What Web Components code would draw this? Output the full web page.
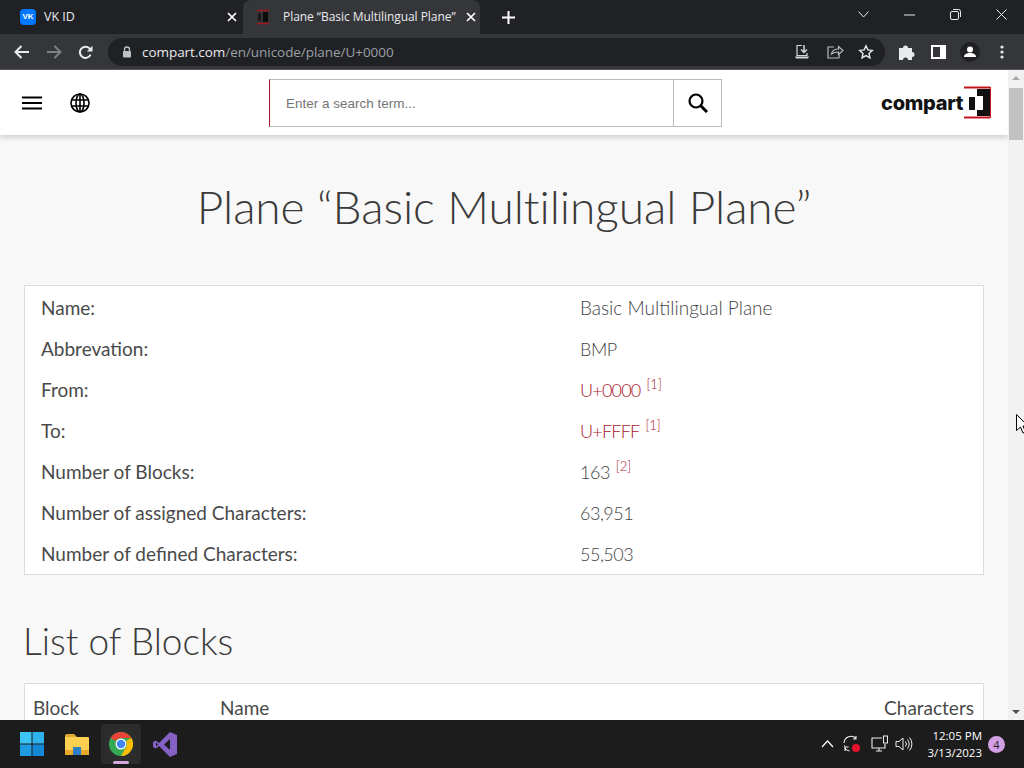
<!DOCTYPE html>
<html lang="en">
<head>
<meta charset="utf-8">
<title>Plane "Basic Multilingual Plane"</title>
<style>
  html, body { margin: 0; padding: 0; width: 1024px; height: 768px; overflow: hidden; background: #f8f8f8; }
  body { display: flex; flex-direction: column; font-family: "Open Sans", sans-serif; position: relative; }
</style>
</head>
<body>
<browser-tabs></browser-tabs>
<browser-toolbar></browser-toolbar>
<page-view>
  <site-header></site-header>
  <h-title>Plane “Basic Multilingual Plane”</h-title>
  <info-card>
    <info-row label="Name:">Basic Multilingual Plane</info-row>
    <info-row label="Abbrevation:"><num-text>BMP</num-text></info-row>
    <info-row label="From:"><red-link>U+0000</red-link><foot-ref>[1]</foot-ref></info-row>
    <info-row label="To:"><red-link>U+FFFF</red-link><foot-ref>[1]</foot-ref></info-row>
    <info-row label="Number of Blocks:"><num-text>163</num-text><foot-ref>[2]</foot-ref></info-row>
    <info-row label="Number of assigned Characters:"><num-text>63,951</num-text></info-row>
    <info-row label="Number of defined Characters:"><num-text>55,503</num-text></info-row>
  </info-card>
  <section-title>List of Blocks</section-title>
  <block-table></block-table>
</page-view>
<win-taskbar></win-taskbar>
<mouse-cursor></mouse-cursor>

<script>
// small helper so every component has the same setup
function comp(name, css, html, extra) {
  class C extends HTMLElement {
    constructor() {
      super();
      this.attachShadow({ mode: 'open' });
      this.shadowRoot.innerHTML = `<style>${css}</style>${html}`;
    }
    connectedCallback() { if (extra) extra(this); }
  }
  customElements.define(name, C);
}

const X_ICON = `<svg width="10" height="10" viewBox="0 0 10 10"><path d="M1 1l8 8M9 1l-8 8" stroke="#fff" stroke-width="1.7" fill="none"/></svg>`;

comp('browser-tabs', `
  :host { display: flex; height: 34px; background: #202124; color: #e8eaed; font: 12px "Open Sans", sans-serif; flex: none; }
  .tab { width: 217px; margin-left: 20px; display: flex; align-items: center; gap: 8px; box-sizing: border-box; padding-bottom: 1px; }
  .tab .t { flex: 1; white-space: nowrap; font-size: 12.5px; }
  .tab.on { width: 237px; margin-left: 6px; padding: 0 4px 1px 12px; background: #35363a; border-radius: 8px 8px 0 0; gap: 12px; }
  .tab.on .t { font-size: 12px; letter-spacing: -.05px; flex: none; width: 178px; }
  .tab.on .x { margin-left: -7px; display: flex; }
  .vk { width: 16px; height: 16px; background: #0077ff; border-radius: 4px; color: #fff; font: 700 8px "Liberation Sans", sans-serif; display: flex; align-items: center; justify-content: center; }
  .plus { margin-left: 22px; width: 16px; display: flex; align-items: center; }
  .win { margin-left: auto; display: flex; align-items: center; padding-bottom: 5px; }
  .win span { display: flex; width: 46px; justify-content: center; }
`, `
  <div class="tab"><div class="vk">VK</div><div class="t">VK ID</div>${X_ICON}</div>
  <div class="tab on">
    <svg width="16" height="16" viewBox="0 0 16 16"><path d="M2 1.500h12M2 14.500h12" stroke="#a3161c" stroke-width="1.600"/><path d="M3 4h3v8H3z" fill="#1a1a1a"/><path d="M8 3h5v10H8z" fill="#0c0c0c"/></svg>
    <div class="t">Plane “Basic Multilingual Plane”</div><span class="x">${X_ICON}</span>
  </div>
  <div class="plus"><svg width="13" height="13" viewBox="0 0 13 13"><path d="M6.500 0v13M0 6.500h13" stroke="#fff" stroke-width="2"/></svg></div>
  <div class="win">
    <span><svg width="11" height="7" viewBox="0 0 11 7"><path d="M.5 .5l5 5.500 5-5.500" stroke="#e8eaed" fill="none"/></svg></span>
    <span><svg width="11" height="2" viewBox="0 0 11 2"><path d="M0 1h11" stroke="#e8eaed"/></svg></span>
    <span><svg width="11" height="11" viewBox="0 0 11 11"><rect x=".5" y="2.500" width="8" height="8" rx="1.500" stroke="#e8eaed" fill="none"/><path d="M3 .5h5.500a2 2 0 0 1 2 2V8" stroke="#e8eaed" fill="none"/></svg></span>
    <span><svg width="11" height="11" viewBox="0 0 11 11"><path d="M.5 .5l10 10M10.500 .5l-10 10" stroke="#e8eaed" fill="none"/></svg></span>
  </div>
`);

comp('browser-toolbar', `
  :host { display: flex; align-items: center; height: 36px; background: #35363a; flex: none; padding: 1px 0 0 14px; box-sizing: border-box; border-bottom: 1px solid #55565a; }
  .btn { display: flex; width: 32px; justify-content: flex-start; }
  .omni { width: 777px; height: 28px; margin-left: -2px; border-radius: 14px; background: #202124; display: flex; align-items: center; padding: 0 10px 0 14px; box-sizing: border-box; color: #9aa0a6; font: 13.500px "Open Sans", sans-serif; }
  .omni b { font-weight: 400; color: #e8eaed; }
  .url { margin-left: 10px; flex: 1; white-space: nowrap; letter-spacing: -.05px; }
  .omni svg { flex: none; }
  .r { display: flex; gap: 14px; align-items: center; margin-right: 1px; }
  .ext { display: flex; align-items: center; margin-left: 14px; gap: 15px; }
`, `
  <div class="btn"><svg width="16" height="14" viewBox="0 0 16 14"><path d="M15 7H2M7.500 1L1.500 7l6 6" stroke="#e8eaed" stroke-width="2" fill="none"/></svg></div>
  <div class="btn"><svg width="16" height="14" viewBox="0 0 16 14"><path d="M1 7h13M8.500 1l6 6-6 6" stroke="#7c7f84" stroke-width="2" fill="none"/></svg></div>
  <div class="btn"><svg width="15" height="15" viewBox="0 0 15 15"><path d="M12.600 9.600A5.600 5.600 0 1 1 11.500 3.400L13 5" stroke="#e8eaed" stroke-width="2" fill="none"/><path d="M14.500 .8V6.500H8.800z" fill="#e8eaed"/></svg></div>
  <div class="omni">
    <svg width="10" height="12" viewBox="0 0 10 12"><path d="M2.500 5V3.500a2.500 2.500 0 0 1 5 0V5" stroke="#bdc1c6" stroke-width="1.300" fill="none"/><rect x="1" y="5" width="8" height="6.500" rx="1" fill="#bdc1c6"/></svg>
    <div class="url"><b>compart.com</b>/en/unicode/plane/U+0000</div>
    <div class="r">
      <svg width="18" height="16" viewBox="0 0 18 16"><path d="M8 1.500H3v10h10V9" stroke="#d5d7da" stroke-width="1.200" fill="none"/><path d="M10 1v7M7 5.500l3 3 3-3" stroke="#d5d7da" stroke-width="1.500" fill="none"/><path d="M1 12.500h14l-1 2H2z" fill="#d5d7da"/></svg>
      <svg width="18" height="16" viewBox="0 0 18 16"><path d="M8 3H2v11h11V9" stroke="#b8babd" stroke-width="1.200" fill="none"/><path d="M5.500 10c.5-3 3-5 7-5V2.500l4.500 4-4.500 4V8c-3 0-5 .5-7 2z" stroke="#b8babd" stroke-width="1.200" fill="none"/></svg>
      <svg width="16" height="16" viewBox="0 0 16 16"><path d="M8 1.800l1.900 4.100 4.400.5-3.300 3 .9 4.400L8 11.600l-3.900 2.200.9-4.400-3.300-3 4.400-.5z" stroke="#e8eaed" stroke-width="1.400" fill="none"/></svg>
    </div>
  </div>
  <div class="ext">
    <svg width="16" height="16" viewBox="0 0 16 16"><path d="M0 4h4a2.500 2.500 0 1 1 5 0h4v4a2.500 2.500 0 1 1 0 5v3H9a2.500 2.500 0 1 0-5 0H0z" fill="#e8eaed"/></svg>
    <svg width="15" height="14" viewBox="0 0 15 14" style="margin-left:1px"><rect x="1" y="1" width="13" height="12" stroke="#fff" stroke-width="2" fill="none"/><rect x="9" y="1" width="5" height="12" fill="#fff"/></svg>
    <svg width="20" height="20" viewBox="0 0 20 20" style="margin-left:-1px"><circle cx="10" cy="10" r="10" fill="#202124"/><circle cx="10" cy="7.500" r="3" fill="#fff"/><path d="M4 15c0-3 3-4 6-4s6 1 6 4z" fill="#fff"/></svg>
    <svg width="4" height="14" viewBox="0 0 4 14" style="margin-left:5px"><circle cx="2" cy="2" r="1.600" fill="#e8eaed"/><circle cx="2" cy="7" r="1.600" fill="#e8eaed"/><circle cx="2" cy="12" r="1.600" fill="#e8eaed"/></svg>
  </div>
`);

comp('page-view', `
  :host { display: block; flex: 1; min-height: 0; position: relative; overflow: hidden; background: #f8f8f8; }
  .main { width: 1008px; padding: 0 24px; box-sizing: border-box; }
  ::slotted(site-header) { margin: 0 -24px; }
  .bar { position: absolute; right: 0; top: 0; bottom: 0; width: 16px; background: #f1f1f1; }
  .thumb { position: absolute; left: 1px; right: 1px; top: 18px; height: 52px; background: #c1c1c1; }
  .ar { position: absolute; left: 4px; width: 0; height: 0; border-left: 4px solid transparent; border-right: 4px solid transparent; }
  .up { top: 6px; border-bottom: 4px solid #a8a8a8; }
  .dn { bottom: 6px; border-top: 4px solid #505050; }
`, `
  <div class="main"><slot></slot></div>
  <div class="bar"><div class="ar up"></div><div class="thumb"></div><div class="ar dn"></div></div>
`);

comp('site-header', `
  :host { display: flex; align-items: center; height: 65px; background: #fff; box-shadow: 0 2px 6px rgba(0,0,0,.2); position: relative; }
  .l { display: flex; align-items: center; padding-left: 22px; gap: 28px; width: 269px; box-sizing: border-box; }
  .search { display: flex; width: 453px; height: 48px; box-sizing: border-box; border: 1px solid #bbb; border-left: 1px solid #a3162a; }
  .inp { flex: 1; display: flex; align-items: center; padding: 2px 0 0 16px; box-sizing: border-box; color: #757575; font: 13.500px "Liberation Sans", sans-serif; }
  .go { width: 47px; border-left: 1px solid #bbb; display: flex; align-items: center; justify-content: center; }
  .logo { margin-left: auto; margin-right: 17px; display: flex; align-items: center; gap: 0; }
  .word { font: 800 20px "Inter", "Liberation Sans", sans-serif; color: #111; letter-spacing: -.3px; line-height: 1; }
`, `
  <div class="l">
    <svg width="20" height="14" viewBox="0 0 20 14"><path d="M0 1.500h20M0 7h20M0 12.500h20" stroke="#000" stroke-width="2.200"/></svg>
    <svg width="20" height="20" viewBox="0 0 20 20"><g fill="none" stroke="#000" stroke-width="1.600"><circle cx="10" cy="10" r="9"/><ellipse cx="10" cy="10" rx="4" ry="9"/><path d="M1.500 7h17M1.500 13h17M10 1v18"/></g></svg>
  </div>
  <div class="search">
    <div class="inp">Enter a search term...</div>
    <div class="go"><svg width="20" height="20" viewBox="0 0 20 20"><circle cx="8" cy="8" r="6.500" stroke="#000" stroke-width="2.200" fill="none"/><path d="M12.500 12.500l6.500 6.500" stroke="#000" stroke-width="3"/></svg></div>
  </div>
  <div class="logo">
    <span class="word">compart</span>
    <svg width="28" height="33" viewBox="0 0 28 33"><path d="M1 1.500h26M1 31.500h26" stroke="#c4141c" stroke-width="2"/><path d="M27.500 1v31" stroke="#c4141c"/><rect x="6" y="11" width="6" height="13" fill="#111"/><rect x="14" y="3" width="13" height="27" fill="#111"/><rect x="14" y="10" width="6" height="14" fill="#fff"/></svg>
  </div>
`);

comp('h-title', `
  :host { display: block; text-align: center; font: 300 46px/55px "Lato", sans-serif; color: #3a3a3a; padding: 44px 0 51px; white-space: nowrap; letter-spacing: -.05px; }
`, `<slot></slot>`);

comp('info-card', `
  :host { display: block; border: 1px solid #ddd; background: #fff; padding: 1px 0 0; height: 290px; box-sizing: border-box; }
`, `<slot></slot>`);

comp('info-row', `
  :host { display: grid; grid-template-columns: 539px 1fr; height: 41px; align-items: center; padding-left: 16px; font: 19px "Lato", sans-serif; color: #4a4a4a; }
  .v { font-weight: 300; color: #444; white-space: nowrap; }
  .k { white-space: nowrap; }
`, `<div class="k"></div><div class="v"><slot></slot></div>`, el => {
  el.shadowRoot.querySelector('.k').textContent = el.getAttribute('label');
});

comp('red-link', `:host { color: #a8141f; font-size: 18px; letter-spacing: -.8px; }`, `<slot></slot>`);

comp('num-text', `:host { font-size: 18px; letter-spacing: -.5px; }`, `<slot></slot>`);

comp('foot-ref', `
  :host { font-size: 13px; margin-left: 6px; position: relative; top: -8px; color: #a8141f; }
`, `<slot></slot>`);

comp('section-title', `
  :host { display: block; font: 300 37px/45px "Lato", sans-serif; color: #3a3a3a; margin-top: 43px; padding-bottom: 20px; margin-left: -1px; }
`, `<slot></slot>`);

comp('block-table', `
  :host { display: block; background: #fff; border: 1px solid #ddd; height: 60px; box-sizing: border-box; font: 19px "Lato", sans-serif; color: #4a4a4a; }
  .row { display: grid; grid-template-columns: 187px 1fr auto; padding: 12px 9px 0 8px; }
`, `<div class="row"><div>Block</div><div>Name</div><div>Characters</div></div>`);

comp('win-taskbar', `
  :host { position: relative; display: flex; align-items: center; height: 48px; background: #1c1c1c; flex: none; color: #fff; font: 11.500px "Open Sans", sans-serif; z-index: 2; }
  .apps { display: flex; align-items: center; padding-left: 12px; gap: 4px; }
  .app { width: 40px; height: 40px; display: flex; align-items: center; justify-content: center; position: relative; border-radius: 4px; }
  .app.on { background: #2c2c2c; }
  .app.on::after { content: ""; position: absolute; bottom: 0; left: 12px; width: 16px; height: 3px; border-radius: 2px; background: #d7a7e0; }
  .tray { margin-left: auto; display: flex; align-items: center; }
  .time { text-align: right; line-height: 17px; width: 60px; margin-left: 9px; white-space: nowrap; }
  .badge { width: 17px; height: 17px; border-radius: 50%; background: #d3a0e6; color: #222; font-size: 11px; display: flex; align-items: center; justify-content: center; margin: 0 19px 0 6px; }
  .ic { display: flex; margin-left: 9px; }
`, `
  <div class="apps">
    <div class="app"><svg width="24" height="24" viewBox="0 0 24 24"><rect x="0" y="0" width="11.500" height="11.500" fill="#3cc4f5"/><rect x="12.500" y="0" width="11.500" height="11.500" fill="#2eb3ee"/><rect x="0" y="12.500" width="11.500" height="11.500" fill="#1e9bdf"/><rect x="12.500" y="12.500" width="11.500" height="11.500" fill="#1488d4"/></svg></div>
    <div class="app" style="margin-left:1px"><svg width="26" height="24" viewBox="0 0 26 24"><path d="M1 4a2 2 0 0 1 2-2h7l3 3v3H1z" fill="#e0a92f"/><path d="M1 5h23a1 1 0 0 1 1 1v16a1 1 0 0 1-1 1H2a1 1 0 0 1-1-1z" fill="#fbcf4f"/><path d="M1 18h24v4a1 1 0 0 1-1 1H2a1 1 0 0 1-1-1z" fill="#eaa92a"/><path d="M9 15h8v8H9z" fill="#2d7fc4"/></svg></div>
    <div class="app on"><svg width="24" height="24" viewBox="0 0 24 24"><circle cx="12" cy="12" r="12" fill="#34a853"/><path d="M12 0a12 12 0 0 1 10.400 6H12a6 6 0 0 0-5.200 3L1.600 6A12 12 0 0 1 12 0z" fill="#ea4335"/><path d="M22.400 6A12 12 0 0 1 12 24l5.200-9A6 6 0 0 0 17.200 9z" fill="#fbbc05"/><circle cx="12" cy="12" r="5.500" fill="#fff"/><circle cx="12" cy="12" r="4.200" fill="#4285f4"/></svg></div>
    <div class="app"><svg width="24" height="25" viewBox="0 0 24 25"><path d="M17 0l7 3v19l-7 3L6 14l-3 2.500L0 15V10l3-1.500L6 11z" fill="#8661c5"/><path d="M17 7v11l-6-5.500z" fill="#1c1c1c"/><path d="M3 10.500v4l2-2z" fill="#1c1c1c"/></svg></div>
  </div>
  <div class="tray">
    <span class="ic"><svg width="13" height="8" viewBox="0 0 13 8"><path d="M1 7l5.500-6L12 7" stroke="#fff" stroke-width="1.200" fill="none"/></svg></span>
    <span class="ic"><svg width="18" height="18" viewBox="0 0 18 18"><path d="M1 8a7 7 0 0 1 12-4.500M13 1v3h-3M1.500 10.500a6 6 0 0 0 5 5.500M2 16v-4h3.500" stroke="#eee" stroke-width="1.100" fill="none"/><circle cx="13" cy="13" r="4" fill="#e8112d"/></svg></span>
    <span class="ic" style="margin-left:10px"><svg width="18" height="18" viewBox="0 0 18 18"><path d="M11 3H1v10h13V9M5 16h6M8 13v3" stroke="#eee" stroke-width="1.100" fill="none"/><rect x="12.500" y="1" width="4" height="7" stroke="#eee" fill="none"/></svg></span>
    <span class="ic" style="margin-left:6px"><svg width="18" height="16" viewBox="0 0 18 16"><path d="M1 5.500h3L8 2v12l-4-3.500H1z" stroke="#eee" fill="none"/><path d="M10.500 5.500a4 4 0 0 1 0 5M12.500 3.500a7 7 0 0 1 0 9M14.500 1.500a10 10 0 0 1 0 13" stroke="#eee" fill="none"/></svg></span>
    <div class="time"><div>12:05 PM</div><div>3/13/2023</div></div>
    <div class="badge">4</div>
  </div>
`);

comp('mouse-cursor', `
  :host { position: absolute; left: 1016px; top: 414px; width: 8px; height: 20px; overflow: hidden; z-index: 3; }
`, `<svg width="13" height="20" viewBox="0 0 13 20"><path d="M.5 .5v16l4-3.500 2.500 6 2.500-1-2.500-6h5z" fill="#fff" stroke="#000"/></svg>`);
</script>
</body>
</html>
